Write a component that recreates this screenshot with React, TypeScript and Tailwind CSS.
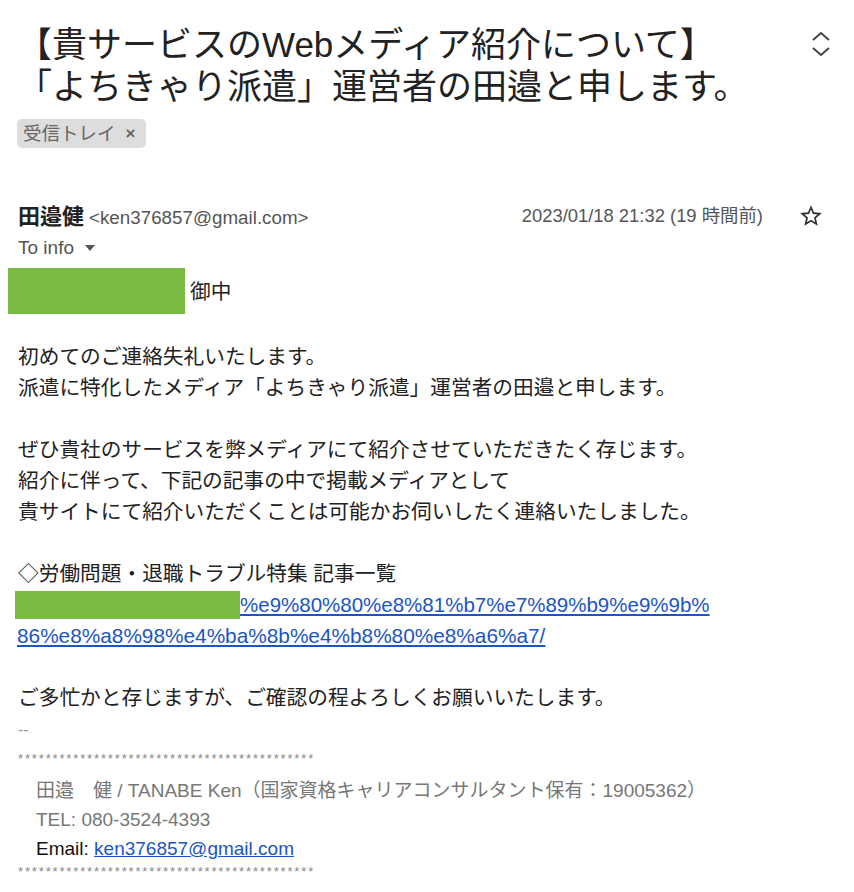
import React from "react";

const FONT = { fontFamily: "'Liberation Sans', 'Noto Sans CJK JP', sans-serif" };

export default function App() {
  const stars = "*******************************************";
  return (
    <div className="w-[854px] h-[892px] bg-white overflow-hidden text-[#222]" style={FONT}>
      <div className="pl-[18px] pt-[24px]">
        {/* Title */}
        <div className="flex justify-between items-start pr-[23px]">
          <h1 className="text-[35px] leading-[42px] font-normal text-[#222] -ml-[1px]">
            【貴サービスのWebメディア紹介について】
            <br />
            「よちきゃり派遣」運営者の田邉と申します。
          </h1>
          <svg width="20" height="28" viewBox="0 0 20 28" className="mt-[7px]" fill="none" stroke="#444" strokeWidth="2">
            <polyline points="2,9 10,2 18,9" />
            <polyline points="2,17 10,24 18,17" />
          </svg>
        </div>

        {/* chip */}
        <div className="mt-[11px] -ml-[1px] inline-flex items-center h-[29px] pl-[6px] pr-[11px] rounded-[5px] bg-[#dddddd] text-[#666] text-[18.5px]">
          <span>受信トレイ</span>
          <span className="ml-[10px] text-[17px] font-bold text-[#666]">×</span>
        </div>

        {/* sender row */}
        <div className="mt-[55px] flex items-center justify-between pr-[30px] h-[26px]">
          <div className="flex items-baseline">
            <span className="text-[22px] font-bold text-[#222]">田邉健</span>
            <span className="ml-[5px] text-[18.8px] text-[#555]">&lt;ken376857@gmail.com&gt;</span>
          </div>
          <div className="flex items-center">
            <span className="text-[18.4px] text-[#555]">2023/01/18 21:32 (19 時間前)</span>
            <svg width="26" height="26" viewBox="0 0 24 24" className="ml-[35px]" fill="#333">
              <path d="M22 9.24l-7.19-.62L12 2 9.19 8.63 2 9.24l5.46 4.73L5.82 21 12 17.27 18.18 21l-1.63-7.03L22 9.24zM12 15.4l-3.760 2.27 1-4.28-3.32-2.88 4.38-.38L12 6.1l1.71 4.04 4.38.38-3.32 2.88 1 4.28L12 15.4z" />
            </svg>
          </div>
        </div>

        {/* To info */}
        <div className="mt-[6px] flex items-center h-[26px] text-[19px] text-[#555]">
          <span>To info</span>
          <svg width="12" height="8" viewBox="0 0 12 8" className="ml-[10px]" fill="#555">
            <polygon points="1,1 11,1 6,7" />
          </svg>
        </div>

        {/* green + 御中 */}
        <div className="mt-[7px] -ml-[10px] flex items-center">
          <div className="w-[177px] h-[46px] bg-[#79bb42]" />
          <span className="ml-[5px] text-[20.7px] text-[#222] mt-[2px]">御中</span>
        </div>

        {/* body */}
        <div className="mt-[27px] text-[20.7px] leading-[31px] text-[#222]">
          <div>初めてのご連絡失礼いたします。</div>
          <div>派遣に特化したメディア「よちきゃり派遣」運営者の田邉と申します。</div>
          <div className="h-[31px]" />
          <div>ぜひ貴社のサービスを弊メディアにて紹介させていただきたく存じます。</div>
          <div>紹介に伴って、下記の記事の中で掲載メディアとして</div>
          <div>貴サイトにて紹介いただくことは可能かお伺いしたく連絡いたしました。</div>
          <div className="h-[31px]" />
          <div>◇労働問題・退職トラブル特集 記事一覧</div>
          <div className="flex items-center h-[31px] -ml-[3px]">
            <div className="w-[225px] h-[28px] bg-[#79bb42]" />
            <a className="text-[20.5px] text-[#1a55c4] underline">%e9%80%80%e8%81%b7%e7%89%b9%e9%9b%</a>
          </div>
          <div className="h-[31px] flex items-center -ml-[1px]">
            <a className="text-[20.8px] text-[#1a55c4] underline">86%e8%a8%98%e4%ba%8b%e4%b8%80%e8%a6%a7/</a>
          </div>
          <div className="h-[31px]" />
          <div>ご多忙かと存じますが、ご確認の程よろしくお願いいたします。</div>
          <div className="h-[32px] flex items-center text-[16px] text-[#999]">--</div>
          <div className="h-[26px] flex items-center text-[13px] text-[#888] tracking-[1.85px]">{stars}</div>
          <div className="pt-[5px] pl-[18px] text-[19px] leading-[29px]">
            <div className="text-[#777]">田邉　健 / TANABE Ken（国家資格キャリアコンサルタント保有：19005362）</div>
            <div className="text-[#777]">TEL: 080-3524-4393</div>
            <div className="text-[#111]">
              Email: <a className="text-[#1a55c4] underline">ken376857@gmail.com</a>
            </div>
          </div>
          <div className="h-[16px] flex items-center text-[13px] text-[#888] tracking-[1.85px]">{stars}</div>
        </div>
      </div>
    </div>
  );
}
